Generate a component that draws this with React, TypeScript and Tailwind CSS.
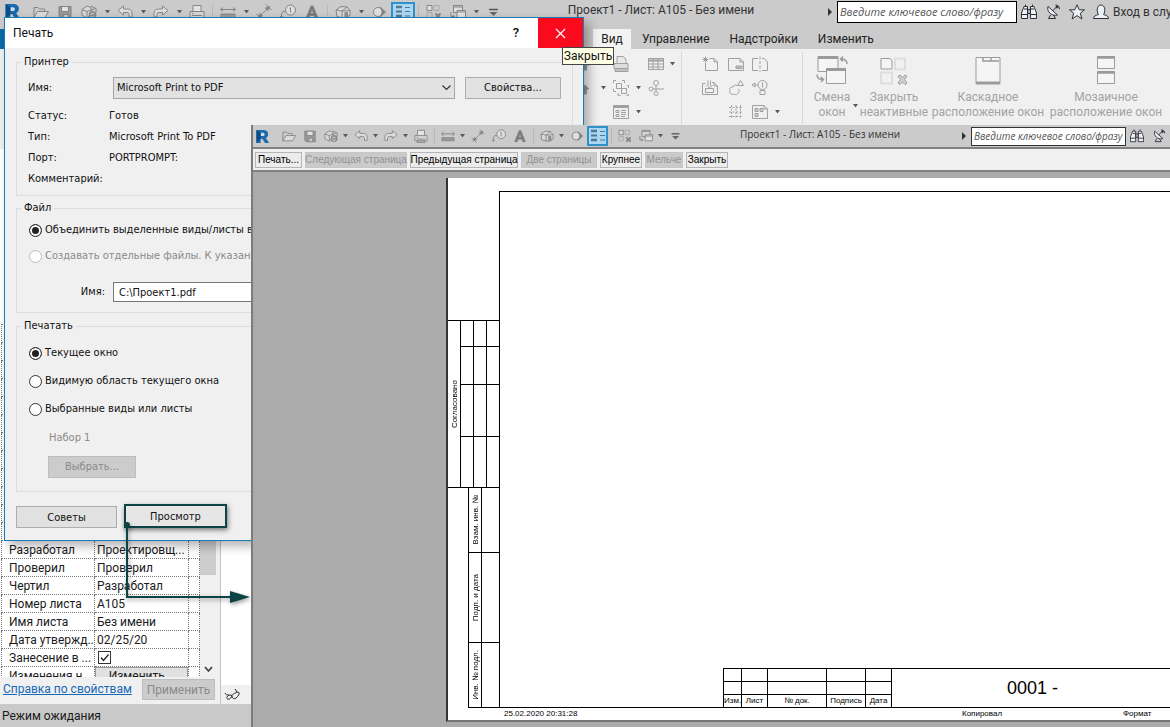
import { useState } from 'react'
import type { ReactNode } from 'react'

interface IconProps {
  size?: number;
  box?: string;
  className?: string;
  children?: ReactNode;
}

function Svg({ size = 16, box = '0 0 16 16', className = '', children }: IconProps) {
  return (
    <svg width={size} height={size} viewBox={box} fill="none" stroke="currentColor" strokeWidth={1} className={`shrink-0 ${className}`} aria-hidden="true">
      {children}
    </svg>
  )
}

const Caret = () => (
  <svg width="5" height="4" viewBox="0 0 5 4" fill="#5b5b5b" aria-hidden="true"><path d="M0 0h5L2.5 3.5z" /></svg>
)

const toolIcons: Record<string, ReactNode> = {
  open: <><path d="M1 14V3.500h4l1.500 1.500h5v2.500" /><path d="M1 13.500L4.500 7.500h11L12 13.500z" fill="#dcdcdc" /></>,
  save: <><path d="M2 2.500h12v12H3.500L2 13z" fill="#999" /><path d="M4.500 2.500h7v5h-7z" fill="#e2e2e2" /><path d="M5 10.500h6v4H5z" fill="#d0d0d0" /><path d="M6.500 11v3" strokeWidth="1.500" /></>,
  sync: <><path d="M1 5.500l5-3.500 4 1.500v7L6 14l-5-3z" fill="#d8d8d8" /><path d="M1 5.500L6 7.500v6M6 7.500L14 4.500M10 2l5 2.500V9" /><circle cx="11.500" cy="11" r="3.500" fill="#8d8d8d" /><path d="M10 11a1.500 1.500 0 0 1 3-.5M13 12a1.500 1.500 0 0 1-3 0" stroke="#ddd" /></>,
  undo: <path d="M1 6.500L6.500 2v3h4c3 0 4.500 2 4.500 4.500V13h-3v-2.500C12 9 11.500 8.500 10 8.500H6.500V11z" fill="#dedede" />,
  redo: <path d="M15 6.500L9.500 2v3h-4C2.500 5 1 7 1 9.500V13h3v-2.500C4 9 4.500 8.500 6 8.500h3.500V11z" fill="#dedede" />,
  print: <><path d="M4 7V1.500h8V7" fill="#e4e4e4" /><path d="M1 7.500h14v6H1z" fill="#d6d6d6" /><path d="M3 11.500h10M3 9.500h1.500" /><path d="M3.500 13.500h9v2h-9z" fill="#c2c2c2" /></>,
  measure: <><path d="M.5 5.500h15M.5 5.500L3 3.500M.5 5.500L3 7.500M15.500 5.500L13 3.500M15.500 5.500L13 7.500" /><path d="M1 10h14v3.500H1z" fill="#999" /></>,
  dimension: <><path d="M4 12L12 4" /><path d="M.5 10L6 15.500M10 .5L15.500 6" /><path d="M2.500 13.500l1.500-4 2.500 2.500zM13.500 2.500l-4 1.500L12 6.500z" fill="currentColor" /></>,
  tag: <><circle cx="10.500" cy="6" r="5" fill="#dedede" /><path d="M10.500 3.500V8.500M9.500 4.500l1-1M5.500 7.500H3L1.500 10v4M0 12l1.500 2.500L3 12" /></>,
  text: <path d="M2 14.500L7 2h2l5 12.500h-2.800l-1-3H5.800l-1 3zM6.500 9.500h3L8 5z" fill="#777" />,
  home: <><path d="M1 6l5-3.500 6 .5 3 3.500v5L9 14l-7-1.500z" fill="#d8d8d8" /><path d="M1 6l6 1 5-4M7 7l8-.5M7 7v7" /><path d="M10 8.500h2.500v5H10z" fill="#999" /></>,
  section: <><circle cx="7" cy="8" r="4.500" fill="#e0e0e0" /><path d="M9 3l5.500 5L9 13a7 7 0 0 0 0-10z" fill="#858585" /></>,
  closeHidden: <><path d="M1 1.500h5v5H1z" fill="#ddd" /><path d="M8 1.500h5v5H8zM1 8.500h5v5H1z" stroke="#aaa" /><path d="M9.500 9.500l5 5M14.500 9.500l-5 5" strokeWidth="2" /></>,
  switchWin: <><path d="M3.500 1.500h9v7h-9zM3.500 3h9" fill="#ddd" /><path d="M7 6.500h8.500v7H7zM7 8h8.500" fill="#e2e2e2" /><path d="M1 8v4.500h3.500M3 11l1.500 1.500L3 14" /></>,
  customize: <><path d="M3 5.500h9" strokeWidth="1.500" stroke="#555" /><path d="M3.500 8h8L7.500 12z" fill="#666" stroke="none" /></>,
}

const toolbar = [
  'open', 'save', 'sync', '>', 'undo', '>', 'redo', '>', 'print', '|', 'measure', '>', 'dimension', 'tag', 'text', '|',
  'home', '>', 'section', 'thinLines', '|', 'closeHidden', 'switchWin', '>', 'customize',
]

function QuickAccess({ compact = false }: { compact?: boolean }) {
  return (
    <div className="flex h-full shrink-0 items-center text-[#858585]">
      <span className={compact ? 'w-[25px] pl-[2px]' : 'w-[29px] pl-1'}>
        <Svg size={compact ? 15 : 17}>
          <path d="M1.500 1h7c3.500 0 5.500 1.500 5.500 4.500 0 2-1 3.300-2.500 4l3.500 5.500h-4.200L7.800 10.500H6V15H1.500z" fill="#1a6aac" stroke="none" />
          <path d="M6 4v3.500h2.300c1.200 0 1.900-.6 1.900-1.700S9.500 4 8.300 4z" fill="#cdddea" stroke="none" />
          <path d="M1.500 1l4.500 3v6.500L1.500 15z" fill="#0d4d87" stroke="none" />
        </Svg>
      </span>
      {toolbar.map((item, i) => {
        if (item === '>') {
          return <button key={i} type="button" aria-label="▾" className={`flex justify-center ${compact ? 'w-[9px]' : 'w-3'}`}><Caret /></button>
        }
        if (item === '|') {
          return <span key={i} className={`flex justify-center ${compact ? 'w-[6px]' : 'w-[7px]'}`}><span className="h-4 w-px bg-[#b9b9b9]" /></span>
        }
        if (item === 'thinLines') {
          return (
            <button key={i} type="button" className={`flex items-center justify-center border-2 border-[#3090cc] bg-[#a9d8f4] text-[#55758a] ${compact ? 'h-5 w-[21px]' : 'h-5 w-6'}`}>
              <Svg>
                <path d="M1 3h6M1 12h6" strokeWidth="2.500" /><path d="M1 7.500h6" strokeWidth="2" /><path d="M10 3.500h5M10 7.500h5M10 12h5" />
              </Svg>
            </button>
          )
        }
        return (
          <button key={i} type="button" className={`flex justify-center ${compact ? 'w-[21px]' : 'w-6'}`}>
            <Svg size={compact ? 14 : 16}>{toolIcons[item]}</Svg>
          </button>
        )
      })}
    </div>
  )
}

const Binoculars = ({ size }: { size: number }) => (
  <Svg size={size} className="text-[#2b3038]">
    <path d="M3 2.500h3.500v12h-6V9zM13 2.500H9.500v12h6V9z" fill="#eef1f5" />
    <path d="M6.500 5.500h3v4h-3zM.5 10.500h6M9.500 10.500h6M3 5h3.500M9.500 5H13M4.500 2V.5M11.500 2V.5" fill="#aab" />
  </Svg>
)

const Dish = ({ size }: { size: number }) => (
  <Svg size={size} className="text-[#2b3038]">
    <path d="M3 2.500c-1.500 5 3.500 10 9.500 8.500z" fill="#eef1f5" />
    <path d="M7.500 7L12 2.500M10.500 1c2.500 0 4 1.500 4 4M5.500 11L3.500 14.500h7L8.500 11" />
    <circle cx="12" cy="3" r="1" fill="currentColor" />
  </Svg>
)

function SearchBox({ compact = false }: { compact?: boolean }) {
  const [query, setQuery] = useState('')
  return (
    <>
      <svg width="4" height="8" viewBox="0 0 4 8" fill="#333" className="mr-[5px] shrink-0" aria-hidden="true"><path d="M0 0l4 4-4 4z" /></svg>
      <input
        type="text"
        aria-label="Введите ключевое слово/фразу"
        placeholder="Введите ключевое слово/фразу"
        value={query}
        onChange={(e) => setQuery(e.target.value)}
        className={`shrink-0 bg-white font-['Open_Sans',sans-serif] italic outline-none placeholder:text-[#555] ${compact ? 'h-[19px] w-[155px] border border-[#333] px-[2px] text-[10px]' : 'h-[22px] w-[180px] border border-black px-[2px] text-[11px]'}`}
      />
    </>
  )
}

/* ---------- ribbon ---------- */

const ribbonIcons: Record<string, ReactNode> = {
  up: <path d="M4 9l4-4 4 4H9.500v5h-3V9z" fill="#999" />,
  render: <><path d="M4 7V.5h6L13 3v4" fill="#e8e8e8" /><path d="M1 7.500h14v5H1z" fill="#ddd" /><path d="M2 12.500h13v3H2z" fill="#c0c0c0" /></>,
  schedule: <><path d="M.5 2.500h15v11H.5z" /><path d="M.5 4.500h15" strokeWidth="2" /><path d="M.5 8h15M.5 11h15M5 3v10M10 3v10" /></>,
  duplicate: <><path d="M3.500 3.500h5v5h-5zM8.500 8.500h5v5h-5z" /><path d="M.5 3V.5H3M.5 9v2.500H3M9 .5h2.500V3M5 13v2.500h2.500M14 5.500h1.500V8M13.500 15.500h2V14" /></>,
  scope: <><circle cx="8" cy="3" r="2.500" /><circle cx="3" cy="9" r="2" /><circle cx="8" cy="13.500" r="2" /><path d="M8 5.500v6M5 9h11" /></>,
  browser: <><path d="M.5 1.500h15v13H.5z" /><path d="M.5 3h15" strokeWidth="2" /><path d="M3 6.500h3v2H3zM3 10.500h3v2H3zM8 6.500h5M8 8.500h5M8 10.500h5M8 12.500h4" /></>,
  newSheet: <><path d="M3.500 7v7.500h12V6L12 2.500H7.500M12 2.500V6h3.500" /><path d="M3.500.5v6M.5 3.500h6M1.500 1.500l4 4M5.500 1.500l-4 4" /></>,
  titleBlock: <><path d="M.5 2.500H12L15.500 6v8.500H.5zM12 2.500V6h3.500" /><path d="M8 10h6v2.500H8z" fill="#bbb" /></>,
  matchline: <><path d="M6 2.500H.5v12H6M10 2.500h2.500L15.500 6v8.500H10" /><path d="M8 .5v15" strokeDasharray="3 1.500" /></>,
  placeView: <><path d="M3.500 3.500h-3v11h15V6L12 2.500h-2M12 2.500V6h3.500" /><path d="M6 .5v5M8.500 .5v5M4.500 5L7.500 8l3-3M3.500 8.500h8v4h-8z" /></>,
  revision: <><path d="M9 5.500c-2-1-4 0-4 1.500-3 0-4 2-3 3.500C1 13 3 15 5 14c2 1 5 1 5-1.500 2-1 1.500-3 0-3.500" /><path d="M12.500.5l3 5h-6z" /></>,
  viewRef: <><circle cx="10.500" cy="5" r="4.500" /><path d="M10.500 2.500v5M6 5H3M0 5l3-2v4zM8 10.500h5v4H8z" /></>,
  grid: <path d="M3.500 1v14M8 1v14M12.500 1v14M1 3.500h14M1 8h14M1 12.500h14" strokeDasharray="2 1.500" />,
  viewports: <><path d="M.5 1.500H12L15.500 5v9.500H.5zM12 1.500V5h3.500" /><path d="M3 4.500h3v3H3zM8 4.500h3v3H8zM3 9.500h3v3H3z" fill="#ccc" /></>,
}

function RibbonIcon({ name }: { name?: string }) {
  if (!name) return <span />
  return <button type="button" className="flex items-center justify-center"><Svg>{ribbonIcons[name]}</Svg></button>
}

const DropCell = ({ show = true }: { show?: boolean }) => (
  <span className="flex items-center justify-center">{show && <Caret />}</span>
)

function LargeButton({ lines, width, children }: { lines: string[], width: string, children: ReactNode }) {
  return (
    <button type="button" className={`flex shrink-0 flex-col items-center whitespace-nowrap text-[12px] leading-[15px] text-[#a3a3a3] ${width}`}>
      <Svg size={32} box="0 0 32 32" className="mb-[3px] text-[#9b9b9b]">{children}</Svg>
      {lines.map(line => <span key={line}>{line}</span>)}
    </button>
  )
}

function Ribbon() {
  return (
    <div className="flex h-[100px] shrink-0 overflow-hidden bg-[#f0f0f0] pt-[3px] text-[#a0a0a0]">
      <div className="grid h-[72px] shrink-0 grid-cols-[20px_16px_20px_15px_20px_12px] grid-rows-3 pr-[3px] pl-[575px]">
        <RibbonIcon name="up" /><DropCell show={false} /><RibbonIcon name="render" /><DropCell show={false} /><RibbonIcon name="schedule" /><DropCell />
        <RibbonIcon name="up" /><DropCell /><RibbonIcon name="duplicate" /><DropCell /><RibbonIcon name="scope" /><DropCell show={false} />
        <RibbonIcon /><DropCell show={false} /><RibbonIcon name="browser" /><DropCell />
      </div>
      <div className="grid h-[72px] w-[122px] shrink-0 grid-cols-[26px_26px_22px_12px] grid-rows-3 border-x border-[#d8d8d8] pl-[15px]">
        <RibbonIcon name="newSheet" /><RibbonIcon name="titleBlock" /><RibbonIcon name="matchline" /><span />
        <RibbonIcon name="placeView" /><RibbonIcon name="revision" /><RibbonIcon name="viewRef" /><span />
        <span /><RibbonIcon name="grid" /><RibbonIcon name="viewports" /><DropCell />
      </div>
      <div className="flex shrink-0 items-start pt-[3px] pl-[11px]">
        <LargeButton lines={['Смена', 'окон']} width="w-9">
          <path d="M2 1.500h20v15H2z" fill="#f5f5f5" /><path d="M2 2.500h20" strokeWidth="3" />
          <path d="M10.500 13.500h19v15h-19z" fill="#f5f5f5" /><path d="M10.500 14.500h19" strokeWidth="3" />
          <path d="M31 9c0-3-2-5-6-5M27 1.500L24.500 4 27 6.500M1 19.500c0 3 2 5 6 5M5 22l2.500 2.500L5 27" strokeWidth="1.500" />
        </LargeButton>
        <span className="mt-[49px] flex w-[11px] justify-center"><Caret /></span>
        <LargeButton lines={['Закрыть', 'неактивные']} width="w-[66px]">
          <path d="M3 3.500h9L14 6v8H3z" fill="#f5f5f5" />
          <path d="M17 3.500h10v11H17zM3 17.500h11v11H3z" stroke="#ddd" strokeWidth="2" />
          <path d="M20 21.500l2-1.500 2.500 2.500L27 20l2 1.500-2.500 3L29 28l-2 1.500-2.500-2.500L22 29.500 20 28l2.500-3.500z" fill="#d0d0d0" />
        </LargeButton>
        <LargeButton lines={['Каскадное', 'расположение окон']} width="ml-[5px] w-28">
          <path d="M4 2.500h24v26H4z" fill="#f5f5f5" /><path d="M4 28h24" strokeWidth="3" /><path d="M11 3v3h16M19 3v3" strokeWidth="1.500" />
        </LargeButton>
        <LargeButton lines={['Мозаичное', 'расположение окон']} width="ml-[6px] w-28">
          <path d="M7.500 1.500h17v12h-17zM7.500 16.500h17v12h-17z" fill="#f5f5f5" /><path d="M7.500 2.500h17M7.500 17.500h17" strokeWidth="2.500" />
        </LargeButton>
      </div>
    </div>
  )
}

/* ---------- properties palette ---------- */

const properties = [
  { name: 'Разработал', value: 'Проектировщ...' },
  { name: 'Проверил', value: 'Проверил' },
  { name: 'Чертил', value: 'Разработал' },
  { name: 'Номер листа', value: 'A105' },
  { name: 'Имя листа', value: 'Без имени' },
  { name: 'Дата утвержд...', value: '02/25/20' },
]

const cell = 'h-[18px] overflow-hidden border border-dotted border-[#777] py-0 whitespace-nowrap'

function PropertiesPalette() {
  const [inList, setInList] = useState(true)
  return (
    <div className="flex w-[221px] shrink-0 flex-col border-r border-[#c4c4c4] bg-[#f0f0f0]">
      <div className="flex min-h-0 flex-1 overflow-hidden">
        <div className="-mb-[9px] flex w-[200px] flex-col justify-end bg-white pl-px">
          <table className="w-full table-fixed border-collapse text-[12px] leading-[16px] text-[#1a1a1a]">
            <colgroup><col className="w-[93px]" /><col className="w-[94px]" /><col /></colgroup>
            <tbody>
              {Array.from({ length: 12 }).map((_, i) => (
                <tr key={i}><td className={cell} /><td className={cell} /><td className={cell} /></tr>
              ))}
              {properties.map(p => (
                <tr key={p.name}>
                  <td className={`${cell} pl-[7px]`}>{p.name}</td>
                  <td className={`${cell} pl-[2px]`}>{p.value}</td>
                  <td className={cell} />
                </tr>
              ))}
              <tr>
                <td className={`${cell} pl-[7px]`}><label htmlFor="in-list">Занесение в ...</label></td>
                <td className={`${cell} pl-[3px]`}>
                  <span className="relative block size-[13px]">
                    <input id="in-list" type="checkbox" checked={inList} onChange={() => setInList(!inList)} className="peer block size-[13px] appearance-none border border-[#333] bg-white" />
                    <svg viewBox="0 0 13 13" fill="none" stroke="#222" strokeWidth="1.300" className="pointer-events-none absolute inset-0 hidden peer-checked:block" aria-hidden="true"><path d="M3 6.500L5.500 9.500 10.500 3.500" /></svg>
                  </span>
                </td>
                <td className={cell} />
              </tr>
              <tr>
                <td className={`${cell} pl-[7px]`}>Изменения н</td>
                <td className={`${cell} p-0`}><button type="button" className="block w-full border border-[#999] bg-[#e1e1e1] leading-[16px]">Изменить...</button></td>
                <td className={cell} />
              </tr>
            </tbody>
          </table>
        </div>
        <div className="flex w-4 flex-col justify-end">
          <span className="h-[170px] w-full bg-[#cdcdcd]" />
          <span className="flex h-[102px] items-end justify-center pb-1">
            <svg width="9" height="7" viewBox="0 0 9 7" fill="none" stroke="#444" strokeWidth="1.800" aria-hidden="true"><path d="M1 1l3.500 4L8 1" /></svg>
          </span>
        </div>
      </div>
      <div className="flex h-[27px] shrink-0 items-start justify-between pr-[5px] pl-[3px] text-[12px]">
        <a href="#help" className="pt-[3px] leading-[18px] text-[#1668b8] underline">Справка по свойствам</a>
        <button type="button" disabled className="mt-[2px] h-[21px] w-[73px] border border-[#bdbdbd] bg-[#cccccc] text-center leading-[18px] whitespace-nowrap text-[#8a8a8a]">Применить</button>
      </div>
    </div>
  )
}

/* ---------- print dialog ---------- */

interface RadioProps {
  name: string;
  label: string;
  checked: boolean;
  disabled?: boolean;
  onChange?: () => void;
}

function Radio({ name, label, checked, disabled, onChange }: RadioProps) {
  return (
    <label className={`flex items-center gap-[3px] whitespace-nowrap ${disabled ? 'text-[#8a8a8a]' : ''}`}>
      <input
        type="radio"
        name={name}
        checked={checked}
        disabled={disabled}
        onChange={() => onChange && onChange()}
        className="size-[13px] shrink-0 appearance-none rounded-full border border-[#333] bg-white checked:bg-[#222] checked:shadow-[inset_0_0_0_2px_white] disabled:border-[#bbb]"
      />
      {label}
    </label>
  )
}

const printer = [
  ['Статус:', 'Готов'],
  ['Тип:', 'Microsoft Print To PDF'],
  ['Порт:', 'PORTPROMPT:'],
  ['Комментарий:', ''],
]

const ranges = ['Текущее окно', 'Видимую область текущего окна', 'Выбранные виды или листы']

function PrintDialog() {
  const [range, setRange] = useState(0)
  const [file, setFile] = useState('C:\\Проект1.pdf')

  return (
    <div role="dialog" aria-labelledby="print-title" className="absolute top-[17px] left-[4px] flex w-[580px] flex-col border border-[#1a7bb8] bg-[#f0f0f0] pb-3 font-['DejaVu_Sans_Condensed','Noto_Sans',sans-serif] text-[11px] leading-[14px] text-[#111] shadow-[5px_5px_10px_rgba(0,0,0,0.3)]">
      <div className="flex h-[30px] items-center bg-white pl-2 font-['Roboto',sans-serif]">
        <h1 id="print-title" className="flex-1 text-[12px]">Печать</h1>
        <button type="button" className="w-11 text-[13px] font-medium">?</button>
        <button type="button" aria-label="Закрыть" className="flex h-full w-[45px] items-center justify-center bg-[#f90a1c]">
          <svg width="11" height="11" viewBox="0 0 11 11" stroke="#fff" strokeWidth="1.200" aria-hidden="true"><path d="M1 1l9 9M10 1l-9 9" /></svg>
        </button>
      </div>
      <div className="absolute top-[29px] left-[557px] w-[52px] border border-[#444] bg-[#ffffe5] text-center font-['Roboto',sans-serif] text-[12px] leading-[16px] whitespace-nowrap">Закрыть</div>

      <div className="flex flex-col px-[11px] pt-[7px]">
        <fieldset className="border border-[#dcdcdc] px-[11px] pb-[6px]">
          <legend className="-ml-[7px] px-[3px]">Принтер</legend>
          <div className="flex items-center pt-[8px]">
            <label htmlFor="printer" className="w-[85px]">Имя:</label>
            <div className="relative w-[342px]">
              <select id="printer" className="h-[22px] w-full appearance-none border border-[#a6a6a6] bg-[#e2e2e2] pl-[3px]">
                <option>Microsoft Print to PDF</option>
              </select>
              <svg width="9" height="6" viewBox="0 0 9 6" fill="none" stroke="#333" strokeWidth="1.200" className="pointer-events-none absolute top-2 right-1" aria-hidden="true"><path d="M.5.5l4 4 4-4" /></svg>
            </div>
            <button type="button" className="ml-[10px] h-[22px] w-24 border border-[#adadad] bg-[#e1e1e1]">Свойства...</button>
          </div>
          <dl className="mt-[6px]">
            {printer.map(([term, value]) => (
              <div key={term} className="flex h-[21px] items-center">
                <dt className="w-[81px] whitespace-nowrap">{term}</dt>
                <dd>{value}</dd>
              </div>
            ))}
          </dl>
        </fieldset>

        <fieldset className="mt-[5px] border border-[#dcdcdc] px-3 pb-[10px]">
          <legend className="-ml-2 px-[3px]">Файл</legend>
          <div className="grid grid-rows-[26px_26px] pt-[2px]">
            <Radio name="output" label="Объединить выделенные виды/листы в один файл" checked />
            <Radio name="output" label="Создавать отдельные файлы. К указанному имени" checked={false} disabled />
          </div>
          <div className="mt-[13px] flex items-center">
            <label htmlFor="file" className="w-[84px] pr-2 text-right">Имя:</label>
            <input id="file" type="text" value={file} onChange={(e) => setFile(e.target.value)} className="h-5 w-[343px] border border-[#777] bg-white pl-[5px] outline-none" />
          </div>
        </fieldset>

        <fieldset className="mt-[6px] border border-[#dcdcdc] px-3 pb-[13px]">
          <legend className="-ml-2 px-[3px]">Печатать</legend>
          <div className="grid grid-rows-[28px_28px_28px] pt-[6px]">
            {ranges.map((label, i) => (
              <Radio key={label} name="range" label={label} checked={range === i} onChange={() => setRange(i)} />
            ))}
          </div>
          <p className="pl-5 leading-[29px] text-[#8a8a8a]">Набор 1</p>
          <button type="button" disabled className="mt-1 ml-[19px] block h-[22px] w-[88px] border border-[#bdbdbd] bg-[#cccccc] text-[#8a8a8a]">Выбрать...</button>
        </fieldset>

        <div className="mt-[12px] flex items-end gap-[7px]">
          <button type="button" className="h-[22px] w-[101px] border border-[#adadad] bg-[#e1e1e1] pt-[2px]">Советы</button>
          <button type="button" className="h-6 w-[103px] border-2 border-[#0d4443] bg-[#e6e6e6] pt-[2px] shadow-[1px_2px_5px_rgba(0,0,0,0.5)]">Просмотр</button>
        </div>
      </div>
    </div>
  )
}

/* ---------- print preview ---------- */

const previewButtons = [
  { label: 'Печать...', width: 'w-[47px]' },
  { label: 'Следующая страница', width: 'w-[102px]', disabled: true },
  { label: 'Предыдущая страница', width: 'w-[108px]' },
  { label: 'Две страницы', width: 'w-[76px]', disabled: true },
  { label: 'Крупнее', width: 'w-[42px]' },
  { label: 'Мельче', width: 'w-[38px]', disabled: true },
  { label: 'Закрыть', width: 'w-[42px]' },
]

const VerticalText = ({ children }: { children: ReactNode }) => (
  <span className="rotate-180 whitespace-nowrap [text-orientation:sideways] [writing-mode:vertical-rl]">{children}</span>
)

const stampLabels = [
  { text: 'Взам. инв. №', height: 'h-[64px]' },
  { text: 'Подп. и дата', height: 'h-[90px]' },
  { text: 'Инв. № подл.', height: 'h-[65px]' },
]

function Sheet() {
  return (
    <div className="mt-[6px] mb-[5px] ml-[193px] flex flex-1 flex-col border-b-2 border-l-2 border-[#333] border-b-[#777] bg-white font-['Liberation_Sans',sans-serif] text-[8px] leading-[9px] text-black">
      <div className="flex flex-1">
        <div className="flex w-[51px] flex-col items-end justify-end">
          <div className="flex h-[167px] w-full border-t border-black">
            <div className="flex w-3 items-center justify-center"><VerticalText>Согласовано</VerticalText></div>
            <div className="flex flex-1 flex-col">
              {['h-[25px]', 'h-[38px] border-t', 'h-[52px] border-t', 'h-[51px] border-t'].map((h, i) => (
                <div key={i} className={`grid grid-cols-3 border-black ${h}`}>
                  <span className="border-l border-black" /><span className="border-l border-black" /><span className="border-l border-black" />
                </div>
              ))}
            </div>
          </div>
          <div className="w-full border-t border-black">
            {stampLabels.map((s, i) => (
              <div key={s.text} className={`ml-[20px] flex border-l border-black ${s.height} ${i > 0 ? 'border-t' : ''}`}>
                <span className="flex w-[13px] items-center justify-center border-r border-black"><VerticalText>{s.text}</VerticalText></span>
              </div>
            ))}
          </div>
        </div>
        <div className="mt-[13px] flex flex-1 flex-col items-end justify-end border-t border-l border-black">
          <div className="flex w-full pl-[223px]">
            <table className="w-[168px] shrink-0 table-fixed border-collapse text-center">
              <colgroup><col className="w-[18px]" /><col className="w-[26px]" /><col className="w-[59px]" /><col className="w-[39px]" /><col className="w-[26px]" /></colgroup>
              <tbody>
                {[0, 1].map(row => (
                  <tr key={row} className="h-[13px]">
                    {[0, 1, 2, 3, 4].map(c => <td key={c} className="border border-black p-0" />)}
                  </tr>
                ))}
                <tr className="h-[13px]">
                  {['Изм.', 'Лист', '№ док.', 'Подпись', 'Дата'].map(t => <td key={t} className="border border-b-0 border-black p-0 whitespace-nowrap">{t}</td>)}
                </tr>
              </tbody>
            </table>
            <div className="flex flex-1 items-center border-t border-black pl-[115px] text-[18px] leading-[18px]">0001 -</div>
          </div>
        </div>
      </div>
      <div className="ml-[20px] flex h-[13px] shrink-0 items-start border-t border-black pt-px pl-[36px] whitespace-nowrap">
        <span className="w-[458px]">25.02.2020 20:31:28</span>
        <span className="w-[161px]">Копировал</span>
        <span>Формат</span>
      </div>
    </div>
  )
}

function PreviewWindow() {
  return (
    <section className="absolute inset-0 top-[125px] left-[251px] flex flex-col overflow-hidden border-l-2 border-[#7c7c7c] bg-[#ababab]">
      <header className="flex h-[22px] shrink-0 items-center bg-[#cbcbcb] text-[#333]">
        <QuickAccess compact />
        <div className="flex-1 pr-2 pb-[3px] text-center font-['Open_Sans',sans-serif] text-[10px] whitespace-nowrap">Проект1 - Лист: A105 - Без имени</div>
        <div className="flex w-[208px] shrink-0 items-center">
          <SearchBox compact />
          <span className="ml-1 flex shrink-0 gap-2"><Binoculars size={14} /><Dish size={14} /></span>
        </div>
      </header>
      <div className="flex h-[25px] shrink-0 items-center gap-[3px] border-y-2 border-[#808080] bg-[#f0f0f0] pl-[2px] font-['Liberation_Sans',sans-serif] text-[10px]">
        {previewButtons.map(b => (
          <button
            key={b.label}
            type="button"
            disabled={b.disabled}
            className={`flex h-4 items-center justify-center border leading-[14px] whitespace-nowrap ${b.width} ${b.disabled ? 'border-[#c6c6c6] bg-[#cacaca] text-[#929292]' : 'border-[#b5b5b5] bg-[#ececec] text-black'}`}
          >
            {b.label}
          </button>
        ))}
      </div>
      <Sheet />
    </section>
  )
}

export default function App() {
  return (
    <div className="relative flex h-screen flex-col overflow-hidden bg-[#cbcbcb] font-['Roboto','Noto_Sans',sans-serif]">
      <header className="flex h-[23px] shrink-0 items-center text-[12px] text-[#333]">
        <QuickAccess />
        <div className="flex-1 pr-3 pb-[3px] text-center whitespace-nowrap">Проект1 - Лист: A105 - Без имени</div>
        <div className="flex w-[342px] shrink-0 items-center overflow-hidden">
          <SearchBox />
          <span className="ml-1 flex shrink-0 items-center gap-2">
            <Binoculars size={16} />
            <Dish size={16} />
            <Svg className="text-[#2b3038]"><path d="M8 .8l2.200 5h5.300l-4.200 3.400 1.600 5.800L8 11.600 3.100 15l1.600-5.800L.5 5.800h5.300z" fill="#eef1f5" /></Svg>
            <Svg className="text-[#2b3038]"><path d="M.5 14.500c0-2.500 2-3 5-4C3.500 8 3.500 1 8 1s4.500 7 2.500 9.500c3 1 5 1.500 5 4z" fill="#eef1f5" /></Svg>
          </span>
          <button type="button" className="ml-1 whitespace-nowrap">Вход в слу</button>
        </div>
      </header>
      <nav className="flex h-[26px] shrink-0 items-end text-[12px] text-[#222]">
        <span className="h-5 w-[593px] shrink-0 bg-linear-to-r from-[#0a6ca8] from-[30px] to-transparent to-[30px]" />
        <div className="flex h-5 items-center">
          <button type="button" className="h-full w-[38px] bg-[#f2f2f2]">Вид</button>
          <button type="button" className="ml-[11px]">Управление</button>
          <button type="button" className="ml-5">Надстройки</button>
          <button type="button" className="ml-5">Изменить</button>
        </div>
      </nav>
      <Ribbon />
      <main className="flex min-h-0 flex-1 bg-[#f0f0f0]">
        <PropertiesPalette />
        <div className="flex flex-1 flex-col justify-end bg-white">
          <div className="flex h-[19px] items-center bg-[#f0f0f0] pl-[3px]">
            <Svg className="text-[#222]"><path d="M1 6c1 2 2 2 4 2M8 8.500c1-2 6-4 7-3s-1 4-3 5.500-4 .5-4-2.500zM8 9c-1 3-4 4-5 2.500S5 7 8 8.500M13 5L11 2" /></Svg>
          </div>
        </div>
      </main>
      <footer className="h-[23px] shrink-0 bg-[#c9c9c9] pl-[2px] text-[12px] leading-[25px] text-[#1a1a1a]">Режим ожидания</footer>

      <PrintDialog />
      <PreviewWindow />
      {/* callout from the preview button to the window it opens */}
      <svg width="130" height="90" viewBox="0 0 130 90" fill="none" className="pointer-events-none absolute top-[518px] left-[122px] drop-shadow-[1px_2px_2px_rgba(0,0,0,0.4)]" aria-hidden="true">
        <path d="M5 7v72h104" stroke="#0d4443" strokeWidth="2" />
        <circle cx="5" cy="7" r="3" fill="#0d4443" />
        <path d="M108 73l20 6-20 6z" fill="#0d4443" />
      </svg>
    </div>
  )
}
